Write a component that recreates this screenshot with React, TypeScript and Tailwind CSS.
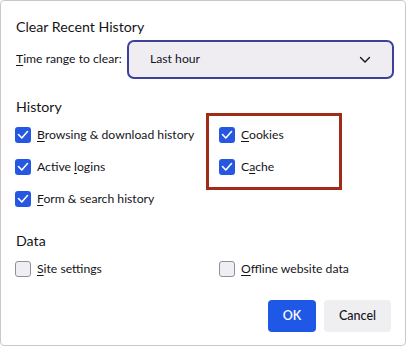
import React from "react";

function Check({ checked }: { checked: boolean }) {
  if (checked) {
    return (
      <span className="w-[16px] h-[16px] rounded-[3px] bg-[#2557e0] flex items-center justify-center shrink-0">
        <svg width="12" height="12" viewBox="0 0 12 12" fill="none">
          <path d="M1.5 5.5 L4.8 9 L10.5 2.5" stroke="white" strokeWidth="1.6" strokeLinecap="round" strokeLinejoin="round" />
        </svg>
      </span>
    );
  }
  return <span className="w-[16px] h-[16px] rounded-[3px] bg-[#efeff3] border border-[#8f8f9d] shrink-0" />;
}

function Item({ checked, pre, u, post }: { checked: boolean; pre: string; u: string; post: string }) {
  return (
    <div className="h-[32px] flex items-center gap-[6px]">
      <Check checked={checked} />
      <span className="text-[12.2px] leading-[18px] whitespace-nowrap">
        {pre}
        <span className="underline underline-offset-[2px]">{u}</span>
        {post}
      </span>
    </div>
  );
}

export default function App() {
  return (
    <div className="w-[406px] h-[346px] bg-white border border-[#c9c9c9] rounded-[4px] flex flex-col pl-[15px] pr-[11px] font-['Lato',sans-serif] text-[#15141a] overflow-hidden">
      <div className="h-[20px] mt-[16px] text-[14.2px] leading-[20px]">Clear Recent History</div>
      <div className="flex items-center mt-[3px] h-[39px]">
        <span className="text-[12.2px] whitespace-nowrap">
          <span className="underline underline-offset-[2px]">T</span>ime range to clear:
        </span>
        <div className="ml-auto shrink-0 w-[267px] h-[39px] rounded-[7px] border-2 border-[#3c4199] bg-[#efedf2] flex items-center pl-[21px] pr-[21px]">
          <span className="text-[12.2px]">Last hour</span>
          <svg className="ml-auto" width="12" height="8" viewBox="0 0 12 8" fill="none">
            <path d="M1.5 1.5 L6 6 L10.5 1.5" stroke="#15141a" strokeWidth="1.4" strokeLinecap="round" strokeLinejoin="round" />
          </svg>
        </div>
      </div>
      <div className="h-[20px] mt-[18px] text-[14.2px] leading-[20px]">History</div>
      <div className="relative grid grid-cols-[204px_1fr] mt-[2px] -ml-px">
        <Item checked pre="" u="B" post="rowsing & download history" />
        <Item checked pre="" u="C" post="ookies" />
        <Item checked pre="Active " u="l" post="ogins" />
        <Item checked pre="C" u="a" post="che" />
        <Item checked pre="" u="F" post="orm & search history" />
        <div />
        <div className="absolute left-[191px] top-[-6px] w-[136px] h-[77px] border-[3px] border-[#a02c17]" />
      </div>
      <div className="h-[20px] mt-[16px] text-[14.2px] leading-[20px]">Data</div>
      <div className="grid grid-cols-[204px_1fr] mt-[2px] -ml-px">
        <Item checked={false} pre="" u="S" post="ite settings" />
        <Item checked={false} pre="" u="O" post="ffline website data" />
      </div>
      <div className="flex justify-end gap-[8px] mt-[15px] mr-[3px]">
        <button className="w-[48px] h-[32px] rounded-[4px] bg-[#1f57e6] text-white text-[12.5px] font-semibold">OK</button>
        <button className="w-[67px] h-[32px] rounded-[4px] bg-[#efeff2] text-[#15141a] text-[12.5px] font-medium">Cancel</button>
      </div>
    </div>
  );
}
